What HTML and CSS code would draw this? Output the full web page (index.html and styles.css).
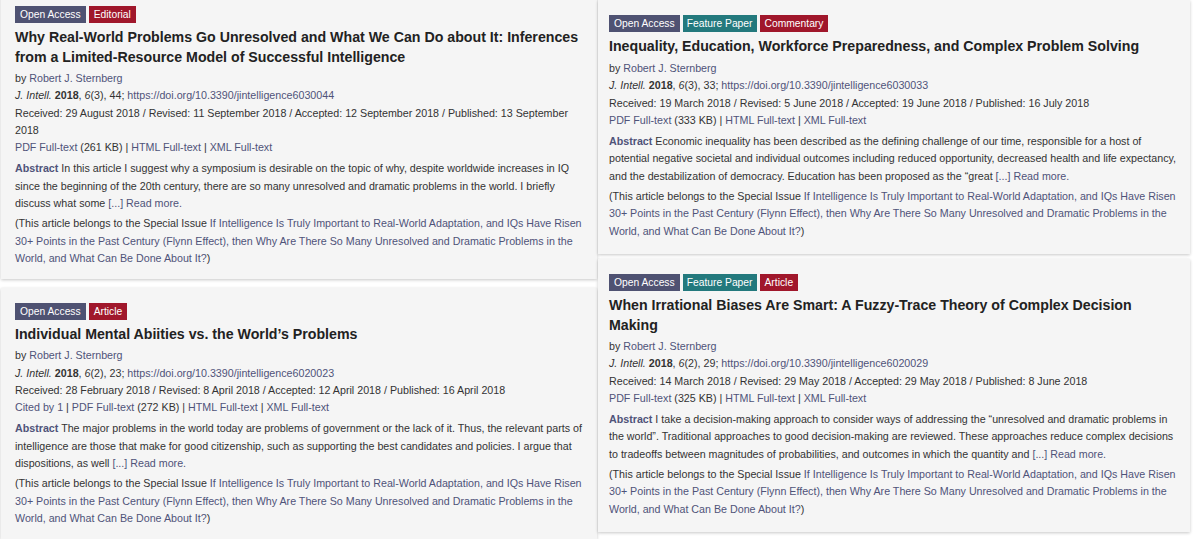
FILE: index.html
```html
<!DOCTYPE html>
<html lang="en">
<head>
<meta charset="utf-8">
<title>Articles</title>
<link rel="stylesheet" href="styles.css">
</head>
<body>
<div class="page">
  <div class="col col-left">
    <div class="card card-first">
      <div class="badges"><span class="badge oa">Open Access</span><span class="badge type">Editorial</span></div>
      <div class="title">Why Real-World Problems Go Unresolved and What We Can Do about It: Inferences from a Limited-Resource Model of Successful Intelligence</div>
      <div class="meta">
        <div>by <a>Robert J. Sternberg</a></div>
        <div><i>J. Intell.</i> <b>2018</b>, <i>6</i>(3), 44; <a>https://doi.org/10.3390/jintelligence6030044</a></div>
        <div>Received: 29 August 2018 / Revised: 11 September 2018 / Accepted: 12 September 2018 / Published: 13 September 2018</div>
        <div><a>PDF Full-text</a> (261 KB) | <a>HTML Full-text</a> | <a>XML Full-text</a></div>
      </div>
      <p class="abstract"><a class="label">Abstract</a> In this article I suggest why a symposium is desirable on the topic of why, despite worldwide increases in IQ since the beginning of the 20th century, there are so many unresolved and dramatic problems in the world. I briefly discuss what some <a>[...] Read more.</a></p>
      <p class="issue">(This article belongs to the Special Issue <a>If Intelligence Is Truly Important to Real-World Adaptation, and IQs Have Risen 30+ Points in the Past Century (Flynn Effect), then Why Are There So Many Unresolved and Dramatic Problems in the World, and What Can Be Done About It?</a>)</p>
    </div>
    <div class="card">
      <div class="badges"><span class="badge oa">Open Access</span><span class="badge type">Article</span></div>
      <div class="title">Individual Mental Abiities vs. the World’s Problems</div>
      <div class="meta">
        <div>by <a>Robert J. Sternberg</a></div>
        <div><i>J. Intell.</i> <b>2018</b>, <i>6</i>(2), 23; <a>https://doi.org/10.3390/jintelligence6020023</a></div>
        <div>Received: 28 February 2018 / Revised: 8 April 2018 / Accepted: 12 April 2018 / Published: 16 April 2018</div>
        <div><a>Cited by 1</a> | <a>PDF Full-text</a> (272 KB) | <a>HTML Full-text</a> | <a>XML Full-text</a></div>
      </div>
      <p class="abstract"><a class="label">Abstract</a> The major problems in the world today are problems of government or the lack of it. Thus, the relevant parts of intelligence are those that make for good citizenship, such as supporting the best candidates and policies. I argue that dispositions, as well <a>[...] Read more.</a></p>
      <p class="issue">(This article belongs to the Special Issue <a>If Intelligence Is Truly Important to Real-World Adaptation, and IQs Have Risen 30+ Points in the Past Century (Flynn Effect), then Why Are There So Many Unresolved and Dramatic Problems in the World, and What Can Be Done About It?</a>)</p>
    </div>
  </div>
  <div class="col col-right">
    <div class="card card-first">
      <div class="badges"><span class="badge oa">Open Access</span><span class="badge fp">Feature Paper</span><span class="badge type">Commentary</span></div>
      <div class="title">Inequality, Education, Workforce Preparedness, and Complex Problem Solving</div>
      <div class="meta">
        <div>by <a>Robert J. Sternberg</a></div>
        <div><i>J. Intell.</i> <b>2018</b>, <i>6</i>(3), 33; <a>https://doi.org/10.3390/jintelligence6030033</a></div>
        <div>Received: 19 March 2018 / Revised: 5 June 2018 / Accepted: 19 June 2018 / Published: 16 July 2018</div>
        <div><a>PDF Full-text</a> (333 KB) | <a>HTML Full-text</a> | <a>XML Full-text</a></div>
      </div>
      <p class="abstract"><a class="label">Abstract</a> Economic inequality has been described as the defining challenge of our time, responsible for a host of potential negative societal and individual outcomes including reduced opportunity, decreased health and life expectancy, and the destabilization of democracy. Education has been proposed as the “great <a>[...] Read more.</a></p>
      <p class="issue">(This article belongs to the Special Issue <a>If Intelligence Is Truly Important to Real-World Adaptation, and IQs Have Risen 30+ Points in the Past Century (Flynn Effect), then Why Are There So Many Unresolved and Dramatic Problems in the World, and What Can Be Done About It?</a>)</p>
    </div>
    <div class="card">
      <div class="badges"><span class="badge oa">Open Access</span><span class="badge fp">Feature Paper</span><span class="badge type">Article</span></div>
      <div class="title">When Irrational Biases Are Smart: A Fuzzy-Trace Theory of Complex Decision Making</div>
      <div class="meta">
        <div>by <a>Robert J. Sternberg</a></div>
        <div><i>J. Intell.</i> <b>2018</b>, <i>6</i>(2), 29; <a>https://doi.org/10.3390/jintelligence6020029</a></div>
        <div>Received: 14 March 2018 / Revised: 29 May 2018 / Accepted: 29 May 2018 / Published: 8 June 2018</div>
        <div><a>PDF Full-text</a> (325 KB) | <a>HTML Full-text</a> | <a>XML Full-text</a></div>
      </div>
      <p class="abstract"><a class="label">Abstract</a> I take a decision-making approach to consider ways of addressing the “unresolved and dramatic problems in the world”. Traditional approaches to good decision-making are reviewed. These approaches reduce complex decisions to tradeoffs between magnitudes of probabilities, and outcomes in which the quantity and <a>[...] Read more.</a></p>
      <p class="issue">(This article belongs to the Special Issue <a>If Intelligence Is Truly Important to Real-World Adaptation, and IQs Have Risen 30+ Points in the Past Century (Flynn Effect), then Why Are There So Many Unresolved and Dramatic Problems in the World, and What Can Be Done About It?</a>)</p>
    </div>
  </div>
</div>
</body>
</html>
```
FILE: styles.css
```css
html, body {
  margin: 0;
  padding: 0;
  background: #ffffff;
  overflow: hidden;
}
body {
  font-family: "Liberation Sans", Arial, Helvetica, sans-serif;
  font-size: 10.7px;
  line-height: 17.3px;
  color: #333333;
}
.page {
  display: flex;
  align-items: flex-start;
  gap: 1px;
  padding-left: 1px;
}
.col {
  display: flex;
  flex-direction: column;
}
.col-left {
  width: 596px;
  gap: 9px;
  margin-top: -9px;
}
.col-right {
  width: 592px;
  gap: 5px;
  margin-top: 0px;
}
.card {
  background: #f5f5f5;
  box-shadow: 0 1px 3px rgba(0, 0, 0, 0.22);
  padding: 15px 12px 12px 14px;
}
.col-right .card {
  padding-left: 11px;
  padding-bottom: 14px;
}
.col-right .card-first .meta {
  margin-top: 4px;
}
.badges {
  display: flex;
  gap: 3px;
  height: 17px;
}
.badge {
  display: inline-block;
  color: #ffffff;
  font-size: 10.3px;
  line-height: 17px;
  height: 17px;
  padding: 0 5px;
}
.badge.fp {
  padding: 0 4px;
}
.badge.oa { background: #4f5272; }
.badge.fp { background: #23797d; }
.badge.type { background: #a0172b; }
.title {
  font-weight: bold;
  font-size: 14.2px;
  line-height: 20px;
  color: #222222;
  margin-top: 4px;
}
.meta {
  margin-top: 3px;
}
a {
  color: #4f5379;
  text-decoration: none;
}
.label {
  font-weight: bold;
}
p {
  margin: 4px 0 0 0;
}
p.issue {
  margin-top: 3px;
}
```
